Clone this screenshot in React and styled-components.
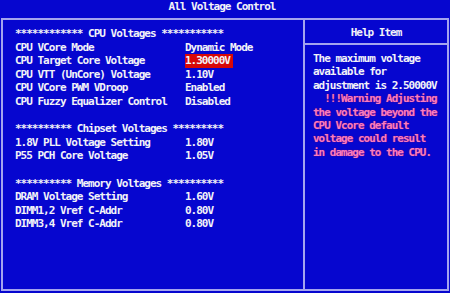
import React from "react";
import styled, { createGlobalStyle } from "styled-components";

const Global = createGlobalStyle`
  html, body {
    margin: 0;
    padding: 0;
    background: #0606cf;
  }
`;

const Screen = styled.div`
  width: 450px;
  height: 293px;
  background: #0606cf;
  color: #f2f2f8;
  font-family: "DejaVu Sans Mono", "Liberation Mono", monospace;
  font-weight: bold;
  font-size: 11px;
  letter-spacing: -1px;
  overflow: hidden;
  display: flex;
  flex-direction: column;
`;

const TitleBar = styled.div`
  height: 18px;
  line-height: 13px;
  text-align: center;
  padding-right: 6px;
`;

const Frame = styled.div`
  margin: 0 1px;
  height: 273px;
  box-sizing: border-box;
  border: 2px solid #a4a4ee;
  display: grid;
  grid-template-columns: 302px 1fr;
`;

const Settings = styled.div`
  border-right: 2px solid #a4a4ee;
  padding: 7px 0 0 12px;
  line-height: 13.6px;
`;

const SectionHead = styled.div`
  white-space: pre;
`;

const Row = styled.div`
  display: grid;
  grid-template-columns: 170px auto;
  white-space: pre;
`;

const Value = styled.span`
  justify-self: start;
  background: ${(p) => (p.$selected ? "#d80808" : "transparent")};
  padding-right: ${(p) => (p.$selected ? "3px" : "0")};
`;

const Blank = styled.div`
  height: 13.6px;
`;

const Help = styled.div`
  display: flex;
  flex-direction: column;
`;

const HelpHead = styled.div`
  height: 25px;
  box-sizing: border-box;
  border-bottom: 2px solid #a4a4ee;
  text-align: center;
  padding-top: 6px;
  line-height: 13.6px;
`;

const HelpBody = styled.div`
  padding: 7px 0 0 8px;
  line-height: 13.4px;
  white-space: pre;
`;

const Warn = styled.div`
  color: #f77cc4;
  text-shadow: 0 0 1px #a0104a;
`;

const cpu = [
  ["CPU VCore Mode", "Dynamic Mode"],
  ["CPU Target Core Voltage", "1.30000V", true],
  ["CPU VTT (UnCore) Voltage", "1.10V"],
  ["CPU VCore PWM VDroop", "Enabled"],
  ["CPU Fuzzy Equalizer Control", "Disabled"],
];

const chipset = [
  ["1.8V PLL Voltage Setting", "1.80V"],
  ["P55 PCH Core Voltage", "1.05V"],
];

const memory = [
  ["DRAM Voltage Setting", "1.60V"],
  ["DIMM1,2 Vref C-Addr", "0.80V"],
  ["DIMM3,4 Vref C-Addr", "0.80V"],
];

const Rows = ({ items }) =>
  items.map(([label, value, selected]) => (
    <Row key={label}>
      <span>{label}</span>
      <Value $selected={selected}>{value}</Value>
    </Row>
  ));

export default function App() {
  return (
    <Screen>
      <Global />
      <TitleBar>All Voltage Control</TitleBar>
      <Frame>
        <Settings>
          <SectionHead>************ CPU Voltages ***********</SectionHead>
          <Rows items={cpu} />
          <Blank />
          <SectionHead>********** Chipset Voltages *********</SectionHead>
          <Rows items={chipset} />
          <Blank />
          <SectionHead>********** Memory Voltages **********</SectionHead>
          <Rows items={memory} />
        </Settings>
        <Help>
          <HelpHead>Help Item</HelpHead>
          <HelpBody>
            <div>The maximum voltage</div>
            <div>available for</div>
            <div>adjustment is 2.50000V</div>
            <Warn>
              <div>  !!!Warning Adjusting</div>
              <div>the voltage beyond the</div>
              <div>CPU Vcore default</div>
              <div>voltage could result</div>
              <div>in damage to the CPU.</div>
            </Warn>
          </HelpBody>
        </Help>
      </Frame>
    </Screen>
  );
}
